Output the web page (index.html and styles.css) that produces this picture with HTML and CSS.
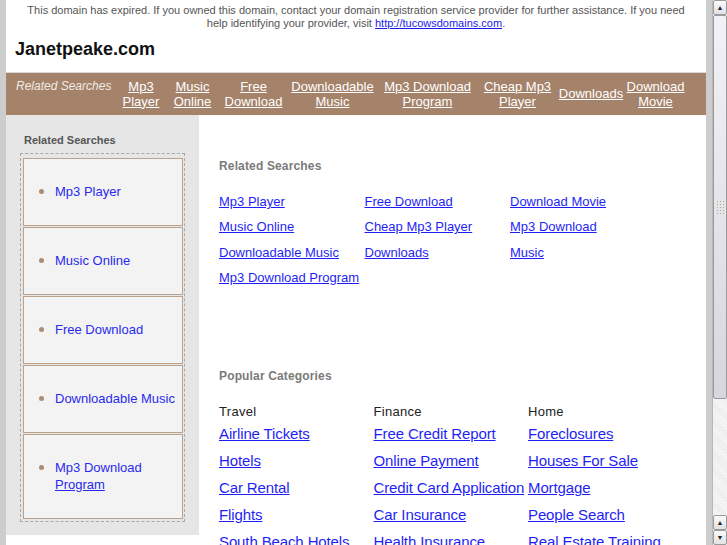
FILE: index.html
```
<!DOCTYPE html>
<html lang="en">
<head>
<meta charset="utf-8">
<title>Janetpeake.com</title>
<link rel="stylesheet" href="styles.css">
</head>
<body>
<div class="frame">
  <div class="edge"></div>
  <div class="page">
    <header class="header">
      <p class="notice">This domain has expired. If you owned this domain, contact your domain registration service provider for further assistance. If you need help identifying your provider, visit <a href="#">http://tucowsdomains.com</a>.</p>
      <h1 class="title">Janetpeake.com</h1>
    </header>
    <nav class="nav">
      <span class="nav-label">Related Searches</span>
      <a href="#">Mp3 Player</a>
      <a href="#">Music Online</a>
      <a href="#">Free Download</a>
      <a href="#">Downloadable Music</a>
      <a href="#">Mp3 Download Program</a>
      <a href="#">Cheap Mp3 Player</a>
      <a href="#">Downloads</a>
      <a href="#">Download Movie</a>
    </nav>
    <div class="body">
      <aside class="sidebar">
        <h3 class="side-title">Related Searches</h3>
        <ul class="side-list">
          <li><a href="#">Mp3 Player</a></li>
          <li><a href="#">Music Online</a></li>
          <li><a href="#">Free Download</a></li>
          <li><a href="#">Downloadable Music</a></li>
          <li><a href="#">Mp3 Download <span class="ul">Program</span></a></li>
        </ul>
      </aside>
      <main class="main">
        <h2 class="sec-title">Related Searches</h2>
        <div class="related">
          <a href="#">Mp3 Player</a>
          <a href="#">Free Download</a>
          <a href="#">Download Movie</a>
          <a href="#">Music Online</a>
          <a href="#">Cheap Mp3 Player</a>
          <a href="#">Mp3 Download</a>
          <a href="#">Downloadable Music</a>
          <a href="#">Downloads</a>
          <a href="#">Music</a>
          <a href="#">Mp3 Download Program</a>
        </div>
        <h2 class="sec-title popular-title">Popular Categories</h2>
        <div class="cats">
          <div class="cat">
            <h4>Travel</h4>
            <a href="#">Airline Tickets</a>
            <a href="#">Hotels</a>
            <a href="#">Car Rental</a>
            <a href="#">Flights</a>
            <a href="#">South Beach Hotels</a>
          </div>
          <div class="cat">
            <h4>Finance</h4>
            <a href="#">Free Credit Report</a>
            <a href="#">Online Payment</a>
            <a href="#">Credit Card Application</a>
            <a href="#">Car Insurance</a>
            <a href="#">Health Insurance</a>
          </div>
          <div class="cat">
            <h4>Home</h4>
            <a href="#">Foreclosures</a>
            <a href="#">Houses For Sale</a>
            <a href="#">Mortgage</a>
            <a href="#">People Search</a>
            <a href="#">Real Estate Training</a>
          </div>
        </div>
      </main>
    </div>
  </div>
  <div class="edge"></div>
  <div class="scrollbar">
    <div class="sb-btn">&#9650;</div>
    <div class="sb-thumb"><span class="grip"></span></div>
    <div class="sb-track"></div>
    <div class="sb-btn">&#9650;</div>
    <div class="sb-btn">&#9660;</div>
  </div>
</div>
</body>
</html>
```
FILE: styles.css
```
* { box-sizing: border-box; }
html, body { margin: 0; padding: 0; }
body {
  width: 727px;
  height: 545px;
  overflow: hidden;
  font-family: "Liberation Sans", Arial, sans-serif;
  background: #fff;
}
.frame {
  display: flex;
  height: 545px;
}
.edge {
  width: 6px;
  flex: none;
  background: #cdcdcd;
}
.page {
  flex: 1;
  min-width: 0;
  overflow: hidden;
  background: #fff;
}
.header {
  height: 73px;
  border-bottom: 1px solid #d8d8d8;
}
.notice {
  margin: 0;
  padding: 4px 14px 0;
  font-size: 11px;
  line-height: 13px;
  color: #555;
  text-align: center;
}
.notice a { color: #1a1aee; }
.title {
  margin: 8px 0 0 9px;
  font-size: 18px;
  line-height: 22px;
  color: #111;
}
.nav {
  height: 42px;
  background: #a5826a;
  display: grid;
  grid-template-columns: 110px 50px 53px 69px 89px 101px 79px 68px 61px;
  align-items: center;
  padding: 0 0 1px;
}
.nav-label {
  align-self: start;
  padding: 6px 0 0 10px;
  font-size: 12px;
  line-height: 15px;
  font-style: italic;
  color: #f0ebe6;
  white-space: nowrap;
}
.nav a {
  color: #fff;
  font-size: 13px;
  line-height: 15px;
  text-align: center;
}
.body {
  display: flex;
  align-items: flex-start;
}
.sidebar {
  width: 193px;
  flex: none;
  background: #e6e6e6;
  padding: 18px 14px 13px;
}
.side-title {
  margin: 0 0 6px 4px;
  font-size: 11px;
  line-height: 14px;
  color: #555;
}
.side-list {
  list-style: none;
  margin: 0;
  border: 1px dashed #a8a8a8;
  padding: 4px 1px 2px 2px;
}
.side-list li {
  display: flex;
  border: 1px solid #bba28c;
  background: #f3f3f3;
  padding: 24px 0 25px 15px;
  margin-bottom: 1px;
}
.side-list li:last-child { margin-bottom: 0; }
.side-list li::before {
  content: "";
  flex: none;
  width: 5px;
  height: 5px;
  border-radius: 50%;
  background: #ad8c74;
  margin: 6px 11px 0 0;
}
.side-list a {
  font-size: 13px;
  line-height: 17px;
  color: #2a2aef;
  text-decoration: none;
}
.side-list .ul { text-decoration: underline; }
.main {
  flex: 1;
  padding: 44px 0 0 20px;
}
.sec-title {
  margin: 0;
  font-size: 12px;
  line-height: 14px;
  color: #7a7a7a;
  letter-spacing: 0.15px;
}
.related {
  display: grid;
  grid-template-columns: repeat(3, 145.5px);
  grid-auto-rows: 25.33px;
  margin-top: 20px;
}
.related a {
  font-size: 13px;
  line-height: 17px;
  color: #1f1ff5;
  white-space: nowrap;
}
.popular-title { margin-top: 75px; }
.cats {
  display: grid;
  grid-template-columns: repeat(3, 154.5px);
  margin-top: 20px;
}
.cat {
  display: flex;
  flex-direction: column;
  align-items: flex-start;
}
.cat h4 {
  margin: 0 0 5px;
  font-size: 13px;
  line-height: 17px;
  font-weight: normal;
  color: #222;
  letter-spacing: 0.3px;
}
.cat a {
  font-size: 15px;
  line-height: 18px;
  margin-bottom: 9px;
  color: #1f1ff5;
  letter-spacing: -0.12px;
  white-space: nowrap;
}
.scrollbar {
  width: 15px;
  flex: none;
  display: flex;
  flex-direction: column;
  background: #f2f2f2;
  border-left: 1px solid #b8b8b8;
}
.sb-btn {
  height: 15px;
  flex: none;
  font-size: 7px;
  line-height: 13px;
  text-align: center;
  color: #222;
  background: linear-gradient(#fafafa, #e2e2e6);
  border: 1px solid #9a9a9a;
  border-radius: 2px;
}
.sb-thumb {
  height: 384px;
  flex: none;
  display: flex;
  align-items: center;
  justify-content: center;
  background: linear-gradient(#f2f2f6, #d6d6dc);
  border: 1px solid #9a9a9a;
  border-radius: 2px;
}
.grip {
  width: 8px;
  height: 14px;
  background: radial-gradient(circle, #aaa 0.6px, transparent 0.9px) 0 0 / 3px 3px;
}
.sb-track {
  flex: 1;
  background: repeating-linear-gradient(45deg, #f6f6f6 0 1px, #ececec 1px 2px);
}
```
